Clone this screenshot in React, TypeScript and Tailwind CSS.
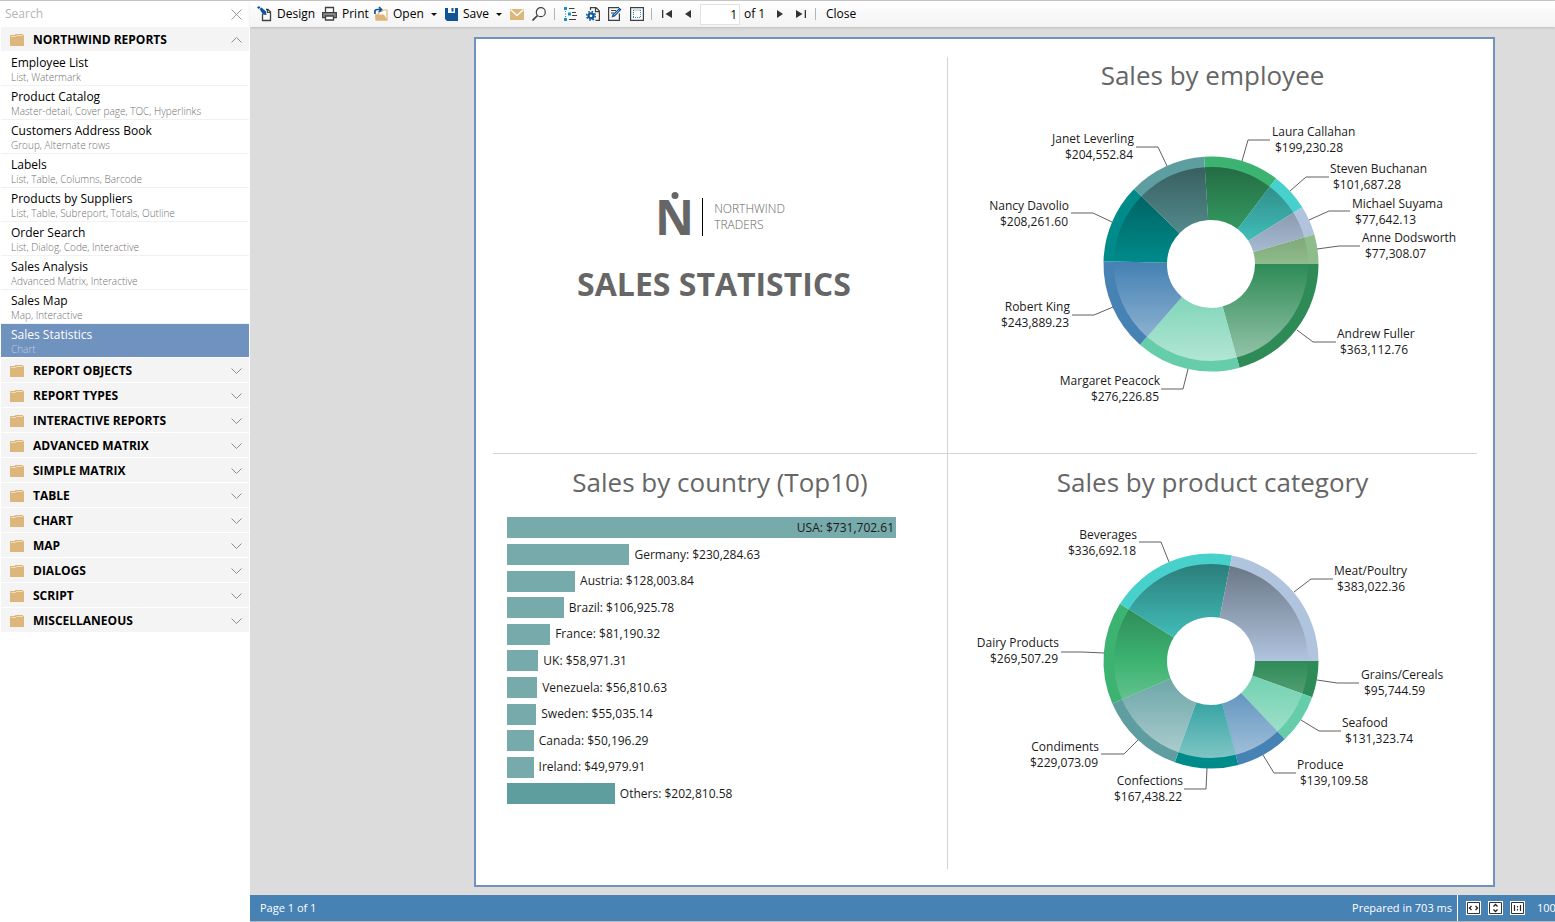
import React, { useState } from "react";

type Item = { title: string; tags: string };

const reports: Item[] = [
  { title: "Employee List", tags: "List, Watermark" },
  { title: "Product Catalog", tags: "Master-detail, Cover page, TOC, Hyperlinks" },
  { title: "Customers Address Book", tags: "Group, Alternate rows" },
  { title: "Labels", tags: "List, Table, Columns, Barcode" },
  { title: "Products by Suppliers", tags: "List, Table, Subreport, Totals, Outline" },
  { title: "Order Search", tags: "List, Dialog, Code, Interactive" },
  { title: "Sales Analysis", tags: "Advanced Matrix, Interactive" },
  { title: "Sales Map", tags: "Map, Interactive" },
  { title: "Sales Statistics", tags: "Chart" },
];

const groups = [
  "REPORT OBJECTS",
  "REPORT TYPES",
  "INTERACTIVE REPORTS",
  "ADVANCED MATRIX",
  "SIMPLE MATRIX",
  "TABLE",
  "CHART",
  "MAP",
  "DIALOGS",
  "SCRIPT",
  "MISCELLANEOUS",
];

const countries: [string, number][] = [
  ["USA", 731702.61],
  ["Germany", 230284.63],
  ["Austria", 128003.84],
  ["Brazil", 106925.78],
  ["France", 81190.32],
  ["UK", 58971.31],
  ["Venezuela", 56810.63],
  ["Sweden", 55035.14],
  ["Canada", 50196.29],
  ["Ireland", 49979.91],
  ["Others", 202810.58],
];

type Slice = {
  name: string;
  value: number;
  color: string;
  line: string;
  x: number;
  y: number;
  left?: boolean;
};

const employees: Slice[] = [
  { name: "Andrew Fuller", value: 363112.76, color: "#2e8b57", line: "86,66 102,78 125,78", x: 126, y: 74 },
  { name: "Margaret Peacock", value: 276226.85, color: "#66cdaa", line: "-23,105 -28,125 -50,125", x: -51, y: 121, left: true },
  { name: "Robert King", value: 243889.23, color: "#4682b4", line: "-98,43 -117,51 -139,51", x: -141, y: 47, left: true },
  { name: "Nancy Davolio", value: 208261.6, color: "#008b8b", line: "-99,-42 -118,-51 -140,-51", x: -142, y: -54, left: true },
  { name: "Janet Leverling", value: 204552.84, color: "#5f9ea0", line: "-44,-98 -53,-117 -75,-117", x: -77, y: -121, left: true },
  { name: "Laura Callahan", value: 199230.28, color: "#3cb371", line: "31,-103 37,-124 59,-124", x: 61, y: -128 },
  { name: "Steven Buchanan", value: 101687.28, color: "#48d1cc", line: "79,-73 95,-87 118,-87", x: 119, y: -91 },
  { name: "Michael Suyama", value: 77642.13, color: "#b0c4de", line: "98,-44 118,-53 139,-53", x: 141, y: -56 },
  { name: "Anne Dodsworth", value: 77308.07, color: "#8fbc8b", line: "106,-15 128,-18 149,-18", x: 151, y: -22 },
];

const categories: Slice[] = [
  { name: "Grains/Cereals", value: 95744.59, color: "#2e8b57", line: "106,19 126,22 148,22", x: 150, y: 18 },
  { name: "Seafood", value: 131323.74, color: "#66cdaa", line: "90,59 108,70 130,70", x: 131, y: 66 },
  { name: "Produce", value: 139109.58, color: "#4682b4", line: "52,94 63,112 85,112", x: 86, y: 108 },
  { name: "Confections", value: 167438.22, color: "#008b8b", line: "-4,107 -5,128 -27,128", x: -28, y: 124, left: true },
  { name: "Condiments", value: 229073.09, color: "#5f9ea0", line: "-73,79 -87,93 -110,93", x: -112, y: 90, left: true },
  { name: "Dairy Products", value: 269507.29, color: "#3cb371", line: "-107,-8 -129,-9 -150,-9", x: -152, y: -14, left: true },
  { name: "Beverages", value: 336692.18, color: "#48d1cc", line: "-42,-99 -50,-119 -72,-119", x: -74, y: -122, left: true },
  { name: "Meat/Poultry", value: 383022.36, color: "#b0c4de", line: "83,-69 100,-82 122,-82", x: 123, y: -86 },
];

const money = (v: number) =>
  "$" + v.toLocaleString("en-US", { minimumFractionDigits: 2, maximumFractionDigits: 2 });

const HOLE = 44;
const FACE = 97;
const RIM = 107.5;

function ring(a: number, b: number, r0: number, r1: number) {
  const p = (r: number, t: number) => `${(r * Math.cos(t)).toFixed(2)} ${(r * Math.sin(t)).toFixed(2)}`;
  const big = b - a > Math.PI ? 1 : 0;
  return `M${p(r1, a)}A${r1} ${r1} 0 ${big} 1 ${p(r1, b)}L${p(r0, b)}A${r0} ${r0} 0 ${big} 0 ${p(r0, a)}Z`;
}

function Donut({ id, slices, label }: { id: string; slices: Slice[]; label: string }) {
  const total = slices.reduce((s, x) => s + x.value, 0);
  let at = 0;
  const arcs = slices.map((s) => {
    const from = at;
    at += (s.value / total) * Math.PI * 2;
    return { ...s, from, to: at };
  });
  return (
    <svg className="h-[310px] w-full" viewBox="-263 -155 529 310" role="img" aria-label={label}>
      <defs>
        <linearGradient id={id} gradientUnits="userSpaceOnUse" x1="0" y1={-FACE} x2="0" y2={FACE}>
          <stop offset="0" stopColor="#000" stopOpacity="0.4" />
          <stop offset="0.5" stopColor="#000" stopOpacity="0" />
          <stop offset="0.5" stopColor="#fff" stopOpacity="0" />
          <stop offset="1" stopColor="#fff" stopOpacity="0.5" />
        </linearGradient>
      </defs>
      {arcs.map((s) => (
        <g key={s.name}>
          <path d={ring(s.from, s.to, HOLE, RIM)} fill={s.color} />
          <path d={ring(s.from, s.to, HOLE, FACE)} fill={`url(#${id})`} />
        </g>
      ))}
      {arcs.map((s) => (
        <g key={s.name}>
          <polyline points={s.line} fill="none" stroke="#606060" strokeWidth="1" />
          <text
            x={s.x}
            y={s.y}
            textAnchor={s.left ? "end" : "start"}
            className="fill-[#1a1a1a] text-xs"
          >
            {s.name}
          </text>
          <text
            x={s.left ? s.x - 1 : s.x + 3}
            y={s.y + 16}
            textAnchor={s.left ? "end" : "start"}
            className="fill-[#1a1a1a] text-xs"
          >
            {money(s.value)}
          </text>
        </g>
      ))}
    </svg>
  );
}

function BarChart() {
  const max = countries[0][1];
  return (
    <ul className="mt-[17px] mr-[51px] ml-[14px] flex h-[287px] flex-col justify-between text-xs text-[#1a1a1a]">
      {countries.map(([name, value]) => {
        const text = `${name}: ${money(value)}`;
        const width = `${(value / max) * 100}%`;
        if (value === max) {
          return (
            <li key={name} className="flex h-[21px] items-center justify-end bg-[#76aaab] pr-[2px]">
              {text}
            </li>
          );
        }
        return (
          <li key={name} className="flex h-[21px] items-center gap-[5px] whitespace-nowrap">
            <div
              className={name === "Others" ? "h-full shrink-0 bg-[#5f9e9f]" : "h-full shrink-0 bg-[#76aaab]"}
              style={{ width }}
            />
            {text}
          </li>
        );
      })}
    </ul>
  );
}

function Folder() {
  return (
    <svg className="h-3 w-[14px] shrink-0" viewBox="0 0 14 12" aria-hidden="true">
      <path d="M0 1h4.5l1-1H13v1h1v11H0z" fill="#dcb67a" />
      <path d="M1 2.5h4.5l1-1H13" fill="none" stroke="#f4e6cc" strokeWidth="0.8" />
    </svg>
  );
}

function Chevron({ up }: { up?: boolean }) {
  return (
    <svg className="h-[6px] w-[11px]" viewBox="0 0 11 6" aria-hidden="true">
      <path d={up ? "M.5 5.5l5-5 5 5" : "M.5 .5l5 5 5-5"} fill="none" stroke="#8c8c8c" strokeWidth="1" />
    </svg>
  );
}

function GroupHeader({ name, open, onClick }: { name: string; open?: boolean; onClick?: () => void }) {
  return (
    <button
      type="button"
      aria-expanded={!!open}
      onClick={onClick}
      className="mb-px flex h-6 w-full items-center bg-[#f4f4f4] pt-[2px] pr-[7px] pl-[9px] text-left"
    >
      <Folder />
      <span className="ml-[9px] flex-1 text-xs font-bold text-black">{name}</span>
      <Chevron up={open} />
    </button>
  );
}

function Sidebar() {
  const [open, setOpen] = useState(true);
  const [active, setActive] = useState("Sales Statistics");
  return (
    <aside className="flex w-[250px] shrink-0 flex-col bg-white pr-px pl-px">
      <div className="flex h-[26px] items-center pr-[7px] pl-1">
        <input
          aria-label="Search reports"
          type="text"
          placeholder="Search"
          className="min-w-0 flex-1 bg-transparent text-xs outline-none placeholder:text-[#b4b4b4]"
        />
        <button type="button" aria-label="Clear search">
          <svg className="h-[11px] w-[11px]" viewBox="0 0 11 11" aria-hidden="true">
            <path d="M.5 .5l10 10M10.5 .5l-10 10" stroke="#9a9a9a" strokeWidth="1" />
          </svg>
        </button>
      </div>
      <nav aria-label="Reports">
        <GroupHeader name="NORTHWIND REPORTS" open={open} onClick={() => setOpen(!open)} />
        {open && (
          <ul>
            {reports.map((r) => {
              const on = r.title === active;
              return (
                <li key={r.title}>
                  <button
                    type="button"
                    onClick={() => setActive(r.title)}
                    className={
                      on
                        ? "flex h-[34px] w-full flex-col border-b border-white bg-[#7092be] pt-[3px] pl-[10px] text-left text-white"
                        : "flex h-[34px] w-full flex-col border-b border-[#f1f1f1] pt-[3px] pl-[10px] text-left text-black"
                    }
                  >
                    <span className="text-xs leading-4">{r.title}</span>
                    <span
                      className={
                        on ? "text-[10px] leading-3 font-light text-[#c0cfe4]" : "text-[10px] leading-3 font-light text-[#707070]"
                      }
                    >
                      {r.tags}
                    </span>
                  </button>
                </li>
              );
            })}
          </ul>
        )}
        {groups.map((g) => (
          <GroupHeader key={g} name={g} />
        ))}
      </nav>
    </aside>
  );
}

function DropArrow() {
  return (
    <svg className="h-[3px] w-[6px]" viewBox="0 0 6 3" aria-hidden="true">
      <path d="M0 0h6L3 3z" fill="#111" />
    </svg>
  );
}

function Separator() {
  return <div className="h-3 w-px shrink-0 bg-[#b5b5b5]" />;
}

const icon = "h-4 w-4 shrink-0";

function Toolbar() {
  const [page, setPage] = useState("1");
  return (
    <div
      role="toolbar"
      aria-label="Report tools"
      className="z-10 flex h-[26px] shrink-0 items-center bg-linear-to-b from-white to-[#f3f3f3] pl-[7px] text-xs whitespace-nowrap text-black shadow-sm"
    >
      <button type="button" className="flex w-[65px] items-center gap-1">
        <svg className={icon} viewBox="0 0 16 16" aria-hidden="true">
          <path d="M5.500 8v6.500h8V6L11 3.500H9" fill="none" stroke="#404040" strokeWidth="1.300" />
          <path d="M10.500 3.500V6.500h3" fill="none" stroke="#404040" strokeWidth="1.200" />
          <path d="M0 1.500L2 0l1.500 1.500L1.500 3zM2.500 3l2-1.500L9 5.500l.5 3.500-3.500-.5z" fill="#0f5499" />
        </svg>
        Design
      </button>
      <button type="button" className="flex w-[52px] items-center gap-1">
        <svg className={icon} viewBox="0 0 16 16" aria-hidden="true">
          <path d="M3.500 6V1.500h8V6" fill="#fff" stroke="#404040" strokeWidth="1.300" />
          <path d="M.7 6.700h13.600v5H.7z" fill="#8f8f8f" stroke="#404040" strokeWidth="1.300" />
          <path d="M3.500 10h8v4h-8z" fill="#fff" stroke="#404040" strokeWidth="1.300" />
        </svg>
        Print
      </button>
      <button type="button" className="flex w-[56px] items-center gap-[3px]">
        <svg className={icon} viewBox="0 0 16 16" aria-hidden="true">
          <path d="M5 5.500h3l1-1.500h4v10H2V9h2z" fill="#fff" stroke="#dcb67a" strokeWidth="1.200" />
          <path d="M1 8.500h9l3.500 6H2z" fill="#dcb67a" />
          <path d="M.9 8V5.500Q.9 3.500 3.500 3.500H7M5 1l2.500 2.500L5 6" fill="none" stroke="#0f5499" strokeWidth="1.700" />
        </svg>
        Open
      </button>
      <button type="button" aria-label="Open options" className="flex w-[15px] justify-start pl-px">
        <DropArrow />
      </button>
      <button type="button" className="flex w-[50px] items-center gap-[5px]">
        <svg className="h-[13px] w-[13px] shrink-0" viewBox="0 0 13 13" aria-hidden="true">
          <path d="M0 0h3v5h7V0h3v13H2l-2-2z" fill="#0f5499" />
          <path d="M6.500 0h2v3.500h-2z" fill="#0f5499" />
        </svg>
        Save
      </button>
      <button type="button" aria-label="Save options" className="flex w-[15px] justify-start pl-px">
        <DropArrow />
      </button>
      <button type="button" aria-label="Send by e-mail" className="w-[22px]">
        <svg className="h-[11px] w-[14px]" viewBox="0 0 14 11" aria-hidden="true">
          <path d="M0 0h14v11H0z" fill="#dcb67a" />
          <path d="M.5 .5L7 6.500 13.500 .5" fill="none" stroke="#fff" strokeWidth="1.300" />
        </svg>
      </button>
      <button type="button" aria-label="Find" className="w-[22px]">
        <svg className="h-[14px] w-[14px]" viewBox="0 0 14 14" aria-hidden="true">
          <circle cx="8.800" cy="5.200" r="4.500" fill="none" stroke="#404040" strokeWidth="1.200" />
          <path d="M5.500 8.500L.5 13.500" stroke="#404040" strokeWidth="1.700" />
        </svg>
      </button>
      <Separator />
      <div className="ml-[9px] flex gap-[8px] pr-[7px]">
        <button type="button" aria-label="Outline">
          <svg className="h-[14px] w-[14px]" viewBox="0 0 14 14" aria-hidden="true">
            <path d="M0 0h3v3H0zM4 5.500h3v3H4zM0 11h3v3H0zM1 4h1v1H1zM1 6.500h1v1H1zM1 9h1v1H1z" fill="#1b8fcb" />
            <path d="M5 1.500H10.500M8 5.500h4M8 8.500h5M5 12.500H12" stroke="#404040" strokeWidth="1.100" />
          </svg>
        </button>
        <button type="button" aria-label="Page settings">
          <svg className="h-[14px] w-[14px]" viewBox="0 0 14 14" aria-hidden="true">
            <path d="M4.500 3V.600h5.500L13.400 4v9.400H9.500M9.500.6v4h3.900" fill="none" stroke="#404040" strokeWidth="1.200" />
            <circle cx="5" cy="8.800" r="4.300" fill="none" stroke="#0f5499" strokeWidth="1.500" strokeDasharray="1.700 1.680" />
            <circle cx="5" cy="8.800" r="2.500" fill="none" stroke="#0f5499" strokeWidth="2.200" />
          </svg>
        </button>
        <button type="button" aria-label="Edit page">
          <svg className="h-[14px] w-[14px]" viewBox="0 0 14 14" aria-hidden="true">
            <path d="M11.400 6.500v6.900H.6V.600H11M3 3.500h5M3 6h3" fill="none" stroke="#404040" strokeWidth="1.200" />
            <path d="M3.500 10.500l1-3L11.500.8 13.500 2.600 6.800 9.600z" fill="#0f5499" />
            <path d="M5.800 8.300L11.300 2.900" stroke="#fff" strokeWidth="0.700" />
          </svg>
        </button>
        <button type="button" aria-label="Watermark">
          <svg className="h-[14px] w-[14px]" viewBox="0 0 14 14" aria-hidden="true">
            <path d="M.6.600h12.800v12.800H.6z" fill="#fff" stroke="#404040" strokeWidth="1.200" />
            <path d="M3.500 3h7.500M3 3.500h0M3 10.500h8" fill="none" stroke="#1b8fcb" strokeDasharray="1 1" />
            <path d="M3.500 3v8M10.500 3v8" fill="none" stroke="#1b8fcb" strokeDasharray="1 1" />
          </svg>
        </button>
      </div>
      <Separator />
      <button type="button" aria-label="First page" className="ml-[10px] w-[23px]">
        <svg className="h-2 w-[10px]" viewBox="0 0 10 8" aria-hidden="true">
          <path d="M0 0h1.300v8H0zM10 0v8L3.500 4z" fill="#333" />
        </svg>
      </button>
      <button type="button" aria-label="Previous page" className="w-[15px]">
        <svg className="h-2 w-[6px]" viewBox="0 0 6 8" aria-hidden="true">
          <path d="M6 0v8L0 4z" fill="#333" />
        </svg>
      </button>
      <input
        aria-label="Page number"
        value={page}
        onChange={(e) => setPage(e.target.value)}
        className="h-[21px] w-10 border border-[#e3e3e3] bg-white pr-[2px] text-right outline-none"
      />
      <span className="w-[37px] pl-1">of 1</span>
      <button type="button" aria-label="Next page" className="w-[19px]">
        <svg className="h-2 w-[6px]" viewBox="0 0 6 8" aria-hidden="true">
          <path d="M0 0v8l6-4z" fill="#333" />
        </svg>
      </button>
      <button type="button" aria-label="Last page" className="w-[19px]">
        <svg className="h-2 w-[10px]" viewBox="0 0 10 8" aria-hidden="true">
          <path d="M10 0H8.700v8H10zM0 0v8l6.500-4z" fill="#333" />
        </svg>
      </button>
      <Separator />
      <button type="button" className="ml-[10px]">
        Close
      </button>
    </div>
  );
}

const heading = "text-center text-[26px] leading-9 text-[#666]";

function ReportPage() {
  return (
    <article className="mt-[10px] mr-[60px] mb-2 ml-56 flex min-w-[1000px] flex-1 border-2 border-[#7092be] bg-white pt-[18px] pr-4 pb-4 pl-[17px]">
      <div className="grid flex-1 grid-cols-[455fr_529fr] grid-rows-[397fr_414fr]">
        <section className="flex flex-col items-center border-r border-b border-[#d4d4d4] pt-[135px]">
          <div className="flex items-center text-[#666]">
            <div className="relative text-[48px] leading-[50px] font-bold" aria-label="Northwind logo">
              N
              <span className="absolute top-0 left-1/2 h-[7px] w-[7px] -translate-x-1/2 rounded-full bg-[#666]" />
            </div>
            <div className="ml-2 h-[38px] w-px bg-black" />
            <p className="ml-[11px] text-xs leading-4 font-light">
              NORTHWIND
              <br />
              TRADERS
            </p>
          </div>
          <h1 className="mt-[22px] mr-3 text-[32px] leading-10 font-bold text-[#666]">SALES STATISTICS</h1>
        </section>
        <section className="border-b border-[#d4d4d4]">
          <h2 className={heading}>Sales by employee</h2>
          <div className="mt-4">
            <Donut id="shade-employee" slices={employees} label="Sales by employee" />
          </div>
        </section>
        <section className="border-r border-[#d4d4d4] pt-[10px]">
          <h2 className={heading}>Sales by country (Top10)</h2>
          <BarChart />
        </section>
        <section className="pt-[10px]">
          <h2 className={heading}>Sales by product category</h2>
          <div className="mt-[6px]">
            <Donut id="shade-category" slices={categories} label="Sales by product category" />
          </div>
        </section>
      </div>
    </article>
  );
}

function StatusBar() {
  const box = "h-[14px] w-[15px]";
  return (
    <footer className="flex h-[27px] shrink-0 items-center overflow-hidden border-b border-[#b8b8b8] bg-[#4682b4] text-[11px] whitespace-nowrap text-white">
      <span className="flex-1 pl-[10px]">Page 1 of 1</span>
      <span className="pr-[5px]">Prepared in 703 ms</span>
      <div className="flex h-full w-[98px] shrink-0 items-center border-l border-white pl-[8px]">
        <div className="flex gap-[7px]">
          <button type="button" aria-label="Page width">
            <svg className={box} viewBox="0 0 15 14" aria-hidden="true">
              <path d="M0 0h15v14H0z" fill="#fff" />
              <path d="M1.500 1.500h12v11h-12z" fill="#fff" stroke="#333" />
              <path d="M5.500 5L3.500 7l2 2M9.500 5l2 2-2 2" fill="none" stroke="#222" strokeWidth="1.300" />
            </svg>
          </button>
          <button type="button" aria-label="Whole page">
            <svg className={box} viewBox="0 0 15 14" aria-hidden="true">
              <path d="M0 0h15v14H0z" fill="#fff" />
              <path d="M1.500 1.500h12v11h-12z" fill="#fff" stroke="#333" />
              <path d="M5.500 5.500l2-2 2 2M5.500 8.500l2 2 2-2" fill="none" stroke="#222" strokeWidth="1.300" />
            </svg>
          </button>
          <button type="button" aria-label="Actual size">
            <svg className={box} viewBox="0 0 15 14" aria-hidden="true">
              <path d="M0 0h15v14H0z" fill="#fff" />
              <path d="M1.500 1.500h12v11h-12z" fill="#fff" stroke="#333" />
              <path d="M4.500 4v6M10.500 4v6M7.500 5v1.500M7.500 8v1.500" fill="none" stroke="#222" strokeWidth="1.200" />
            </svg>
          </button>
        </div>
        <span className="ml-[12px]">100%</span>
      </div>
    </footer>
  );
}

export default function App() {
  return (
    <div className="flex min-h-screen overflow-hidden border-t border-[#c4c4c4] bg-[#dcdcdc] font-['Open_Sans','Noto_Sans',sans-serif]">
      <Sidebar />
      <main className="flex min-w-0 flex-1 flex-col">
        <Toolbar />
        <div className="flex flex-1">
          <ReportPage />
        </div>
        <StatusBar />
      </main>
    </div>
  );
}
